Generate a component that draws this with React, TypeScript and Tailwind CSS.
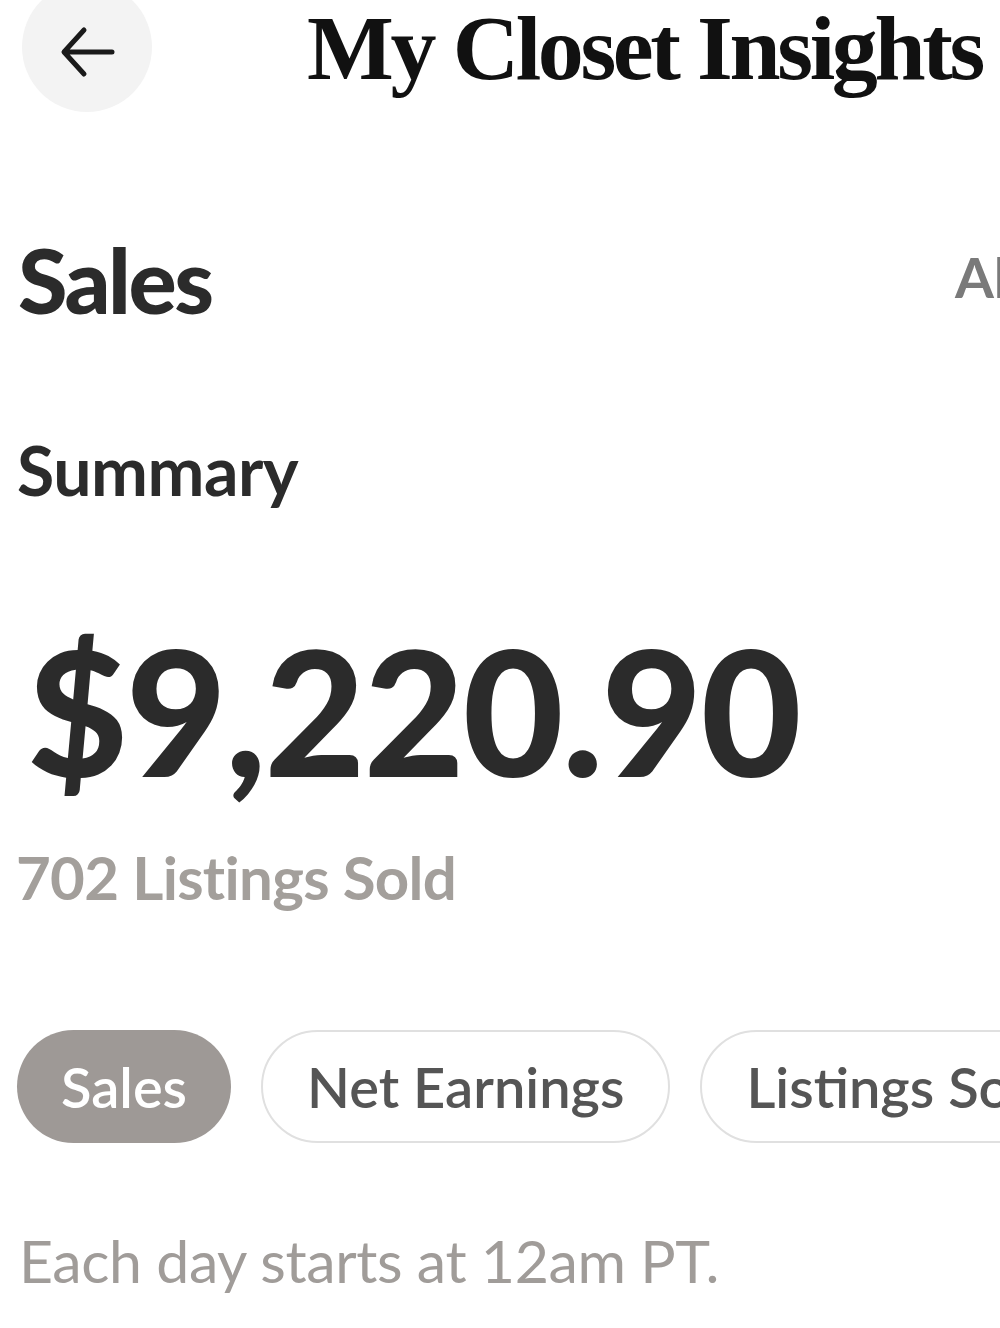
import React from "react";

const sans = { fontFamily: "Lato, 'Noto Sans', sans-serif" };

export default function App() {
  return (
    <div className="w-[1000px] h-[1328px] overflow-hidden bg-white relative" style={sans}>
      {/* Header */}
      <div className="flex items-start">
        <button className="ml-[22px] -mt-[18px] w-[130px] h-[130px] shrink-0 rounded-full bg-[#f3f3f3] flex items-center justify-center">
          <svg width="56" height="56" viewBox="0 0 56 56" fill="none" className="mt-[10px]">
            <path d="M53 28 H6 M25 6 L5 28 L25 50" stroke="#1a1a1a" strokeWidth="5" strokeLinecap="round" strokeLinejoin="round" />
          </svg>
        </button>
        <h1
          className="shrink-0 ml-[155px] -mt-[2px] text-[92px] leading-[100px] font-bold text-[#111] whitespace-nowrap tracking-[-3.4px]"
          style={{ fontFamily: "'Liberation Serif', 'Times New Roman', serif" }}
        >
          My Closet Insights
        </h1>
      </div>

      {/* Sales row */}
      <div className="grid grid-cols-[955px_auto] items-center mt-[117px] pl-[18px]">
        <div className="text-[90px] leading-[100px] font-black text-[#2b2b2b] tracking-[-2.5px]">Sales</div>
        <div className="-ml-[18px] -mt-[4px] text-[56px] leading-[100px] font-bold text-[#7a7a7a] whitespace-nowrap">All Time</div>
      </div>

      {/* Summary */}
      <div className="mt-[101px] pl-[17px] text-[68px] leading-[80px] font-bold text-[#2b2b2b] tracking-[-0.5px]">
        Summary
      </div>

      {/* Amount */}
      <div className="mt-[110px] pl-[27px] text-[174px] leading-[180px] font-black text-[#2b2b2b] tracking-[-1.8px]">
        $9,220.90
      </div>

      <div className="mt-[37px] pl-[16px] text-[60px] leading-[80px] font-bold text-[#a39f9b] tracking-[-0.7px]">
        702 Listings Sold
      </div>

      {/* Pills */}
      <div className="mt-[113px] pl-[17px] flex gap-[30px] whitespace-nowrap">
        <div className="shrink-0 h-[113px] px-[44px] rounded-full bg-[#9e9996] text-white text-[56px] font-semibold flex items-center">
          Sales
        </div>
        <div className="shrink-0 h-[113px] px-[44px] rounded-full border-2 border-[#e0e0e0] text-[#555] text-[56px] font-semibold flex items-center">
          Net Earnings
        </div>
        <div className="shrink-0 h-[113px] px-[44px] rounded-full border-2 border-[#e0e0e0] text-[#555] text-[56px] font-semibold flex items-center">
          Listings Sold
        </div>
      </div>

      <div className="mt-[78px] pl-[19px] text-[59px] leading-[80px] text-[#a09c99] tracking-[-0.4px]">
        Each day starts at 12am PT.
      </div>
    </div>
  );
}
